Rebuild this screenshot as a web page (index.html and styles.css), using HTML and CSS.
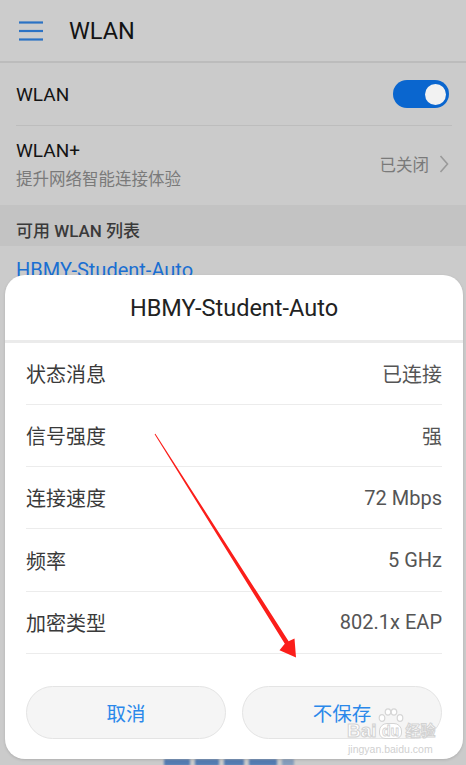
FILE: index.html
```html
<!DOCTYPE html>
<html lang="zh-CN">
<head>
<meta charset="utf-8">
<title>WLAN</title>
<link rel="stylesheet" href="styles.css">
</head>
<body>
<div class="screen">
  <header class="appbar">
    <svg class="menu" width="24" height="20" viewBox="0 0 24 20"><g stroke="#2b72c4" stroke-width="2.2"><line x1="0" y1="1.5" x2="24" y2="1.5"/><line x1="0" y1="10" x2="24" y2="10"/><line x1="0" y1="18.5" x2="24" y2="18.5"/></g></svg>
    <span class="appbar-title">WLAN</span>
  </header>

  <div class="row row-wlan">
    <span class="row-title">WLAN</span>
    <span class="toggle"><span class="knob"></span></span>
  </div>
  <div class="divider"></div>
  <div class="row row-plus">
    <div class="plus-text">
      <span class="row-title">WLAN+</span>
      <span class="row-sub">提升网络智能连接体验</span>
    </div>
    <div class="plus-status">
      <span>已关闭</span>
      <svg width="10" height="18" viewBox="0 0 10 18"><polyline points="1.5,1 8.5,9 1.5,17" fill="none" stroke="#9a9a9a" stroke-width="1.6"/></svg>
    </div>
  </div>
  <div class="section">可用 WLAN 列表</div>
  <div class="network">HBMY-Student-Auto</div>
  <div class="behind"><span class="b1"></span><span class="b2"></span><span class="b3"></span><span class="b4"></span><span class="b5"></span></div>

  <div class="dialog">
    <div class="dialog-title">HBMY-Student-Auto</div>
    <div class="info-list">
      <div class="info"><span>状态消息</span><span class="val">已连接</span></div>
      <div class="info"><span>信号强度</span><span class="val">强</span></div>
      <div class="info"><span>连接速度</span><span class="val">72 Mbps</span></div>
      <div class="info"><span>频率</span><span class="val">5 GHz</span></div>
      <div class="info"><span>加密类型</span><span class="val">802.1x EAP</span></div>
    </div>
    <div class="actions">
      <button class="btn">取消</button>
      <button class="btn">不保存</button>
    </div>
  </div>

  <svg class="arrow" width="466" height="765" viewBox="0 0 466 765">
    <polygon points="154.6,434.3 155.4,433.7 288.6,641.2 294.5,638.5 296,657.5 279.5,650.2 284.8,643.8" fill="#fb1e1a"/>
  </svg>

  <div class="watermark">
    <div class="wm-top"><span class="bai">Bai</span><span class="paw"><svg width="26" height="18" viewBox="0 0 26 18"><g fill="#ffffff" stroke="#d6d6d6" stroke-width="1.2"><ellipse cx="4" cy="10" rx="2.8" ry="3.4"/><ellipse cx="10" cy="4" rx="2.8" ry="3.2"/><ellipse cx="16" cy="4" rx="2.8" ry="3.2"/><ellipse cx="22" cy="10" rx="2.8" ry="3.4"/></g></svg><span class="du">du</span></span><span class="jy">经验</span></div>
    <div class="wm-bottom">jingyan.baidu.com</div>
  </div>
</div>
</body>
</html>
```

FILE: styles.css
```css
* { box-sizing: border-box; }
html, body { margin: 0; padding: 0; }
body {
  width: 466px;
  height: 765px;
  overflow: hidden;
  background: #cbcbcb;
  font-family: Roboto, "Noto Sans CJK SC", "Noto Sans", sans-serif;
}
.screen {
  position: relative;
  width: 466px;
  height: 765px;
  background: #cbcbcb;
  overflow: hidden;
}
.appbar {
  height: 63px;
  display: flex;
  align-items: center;
  padding: 0 0 0 19px;
  border-bottom: 2px solid #bcbcbc;
  background: #cccccc;
}
.menu { display: block; }
.appbar-title {
  margin-left: 26px;
  font-size: 23.5px;
  color: #131313;
}
.row {
  display: flex;
  align-items: center;
  justify-content: space-between;
  padding: 0 17px 0 16px;
}
.row-wlan { height: 62px; }
.row-title { font-size: 19px; color: #141414; }
.toggle {
  width: 56px;
  height: 28px;
  border-radius: 14px;
  background: #0a66cf;
  display: flex;
  align-items: center;
  justify-content: flex-end;
  padding-right: 3px;
}
.knob {
  width: 21px;
  height: 21px;
  border-radius: 50%;
  background: #f2f2f2;
}
.divider {
  height: 1px;
  margin: 0 14px 0 16px;
  background: #bdbdbd;
}
.row-plus { height: 79px; padding-bottom: 3px; }
.plus-text { display: flex; flex-direction: column; gap: 4px; }
.row-sub { font-size: 16.5px; color: #7a7a7a; }
.plus-status {
  display: flex;
  align-items: center;
  gap: 10px;
  font-size: 16.5px;
  color: #7a7a7a;
}
.plus-status svg { display: block; }
.section {
  height: 41px;
  background: #c3c3c3;
  padding: 12px 0 0 16px;
  font-size: 17px;
  font-weight: 500;
  color: #3a3a3a;
}
.network {
  padding: 12px 0 0 16px;
  font-size: 20px;
  color: #1a6fd2;
}
.behind {
  position: absolute;
  left: 164px;
  top: 759px;
  display: flex;
  gap: 5px;
  filter: blur(0.8px);
}
.behind span {
  display: block;
  height: 7px;
  background: #3f6fae;
  border-radius: 1px;
  opacity: 0.85;
}
.behind .b1 { width: 26px; }
.behind .b2 { width: 24px; }
.behind .b3 { width: 20px; }
.behind .b4 { width: 28px; }
.behind .b5 { width: 12px; opacity: 0.5; }
.dialog {
  position: absolute;
  left: 5px;
  top: 275px;
  width: 458px;
  height: 484px;
  background: #ffffff;
  border-radius: 20px;
  box-shadow: 0 1px 3px rgba(0,0,0,0.14);
  display: flex;
  flex-direction: column;
}
.dialog-title {
  height: 68px;
  display: flex;
  align-items: center;
  justify-content: center;
  font-size: 23.5px;
  color: #222222;
  border-bottom: 3px solid #ebebeb;
}
.info-list { padding: 0 21px 0 21px; }
.info {
  height: 62.3px;
  display: flex;
  align-items: center;
  justify-content: space-between;
  border-bottom: 1px solid #ececec;
  font-size: 20px;
  color: #3a3a3a;
}
.info:first-child { height: 61.8px; }
.val { color: #555555; }
.actions {
  display: flex;
  gap: 16px;
  padding: 32px 21px 0 21px;
}
.btn {
  flex: 1;
  height: 53px;
  border-radius: 27px;
  border: 1px solid #e4e4e4;
  background: #f5f5f5;
  font-family: Roboto, "Noto Sans CJK SC", sans-serif;
  font-size: 19.5px;
  color: #2a88ea;
  padding: 0;
}
.arrow {
  position: absolute;
  left: 0;
  top: 0;
  pointer-events: none;
}
.watermark {
  position: absolute;
  left: 347px;
  top: 709px;
  font-family: "Liberation Sans", "Noto Sans CJK SC", sans-serif;
  white-space: nowrap;
}
.wm-top {
  display: flex;
  align-items: flex-end;
  height: 30px;
  font-weight: bold;
  color: #ffffff;
  -webkit-text-stroke: 1px #d2d2d2;
}
.bai { font-size: 19px; line-height: 16px; }
.paw {
  display: flex;
  flex-direction: column;
  align-items: center;
  margin: 0 1px;
}
.paw svg { display: block; }
.du {
  font-size: 14px;
  line-height: 14px;
  background: #ffffff;
  border: 1px solid #d4d4d4;
  border-radius: 8px 8px 6px 6px;
  padding: 0 2px;
  margin-top: -3px;
  -webkit-text-stroke: 0.8px #d2d2d2;
}
.jy { font-size: 15px; line-height: 16px; margin-left: 1px; }
.wm-bottom {
  font-size: 10.5px;
  line-height: 12px;
  color: #d0d0d0;
  padding-left: 1px;
  margin-top: 4px;
}
```
